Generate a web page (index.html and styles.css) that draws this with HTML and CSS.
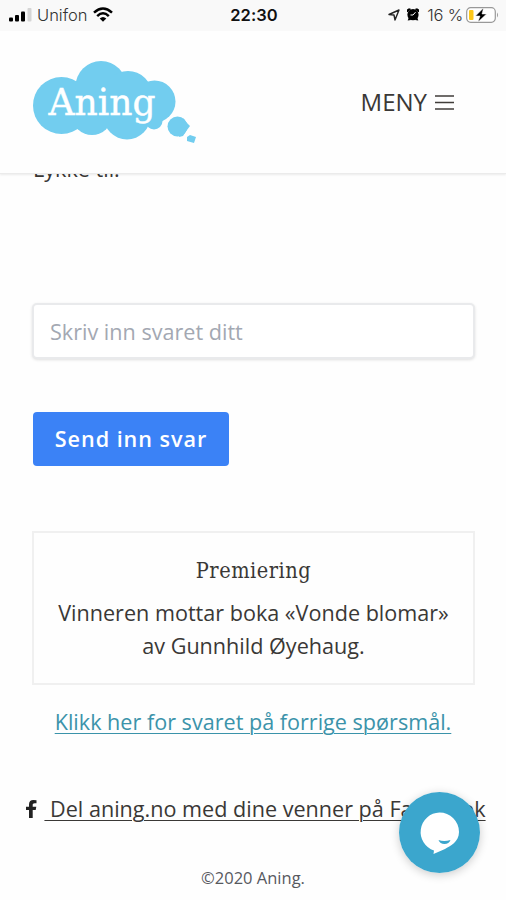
FILE: index.html
```html
<!DOCTYPE html>
<html lang="no">
<head>
<meta charset="utf-8">
<meta name="viewport" content="width=device-width">
<title>Aning</title>
<link rel="stylesheet" href="styles.css">
</head>
<body>
<div class="top">
  <div class="status">
    <div class="status-left">
      <svg class="signal" width="23" height="14" viewBox="0 0 23 14"><rect x="0" y="9.500" width="4" height="4" rx="1"/><rect x="6" y="7" width="4" height="6.500" rx="1"/><rect x="12" y="3.500" width="4" height="10" rx="1"/><rect x="18.500" y="0" width="4" height="13.500" rx="1" fill="#d5d5d5"/></svg>
      <span class="carrier">Unifon</span>
      <svg class="wifi" width="20" height="15" viewBox="0 0 20 15" fill="none" stroke="#000" stroke-width="2.500"><path d="M1 5.600Q10-2.600 19 5.600M4.200 9.100Q10 3.500 15.800 9.100"/><path d="M6.700 11.500Q10 8.500 13.300 11.500L10 14.800Z" fill="#000" stroke="none"/></svg>
    </div>
    <span class="clock">22:30</span>
    <div class="status-right">
      <svg width="12" height="12" viewBox="0 0 12 12" fill="none" stroke="#222" stroke-width="1.400" stroke-linejoin="round"><path d="M1 5.500 11 1 7 11 6 6Z"/></svg>
      <svg class="alarm" width="12" height="13" viewBox="0 0 12 13"><circle cx="6" cy="6.700" r="5.600"/><path d="M0 4V1.500L2 .2 4.200 1 1 4ZM12 4V1.500L10 .2 7.800 1 11 4ZM.7 12.600 2 9 4 12ZM11.300 12.600 10 9 8 12Z"/><path d="M8.500 4.200 6 7H3.500" fill="none" stroke="#fff"/></svg>
      <span class="percent">16 %</span>
      <svg class="battery" width="33" height="16" viewBox="0 0 33 16"><rect x=".7" y=".7" width="28.600" height="14.600" rx="4" fill="#fff" stroke="#999" stroke-width="1.200"/><rect x="3" y="3" width="4.500" height="10" rx="1" fill="#fdc719"/><path d="M31 5.500Q33 8 31 10.500Z" fill="#999"/><path d="M17.500 1 9.500 9H14L12 15 20.500 7H16Z" fill="#000" stroke="#fff" stroke-width=".5"/></svg>
    </div>
  </div>
  <header class="header">
    <svg class="logo" width="165" height="86" viewBox="0 0 165 86">
      <g fill="#72cdef"><circle cx="28.500" cy="44.500" r="28.500"/><circle cx="68" cy="25.500" r="25.500"/><circle cx="95" cy="34" r="24"/><circle cx="121.500" cy="40.500" r="21"/><circle cx="59" cy="54" r="20"/><circle cx="94" cy="55" r="23.500"/><circle cx="121" cy="60" r="8.500"/><rect x="28" y="29" width="100" height="32"/><circle cx="144.500" cy="65.500" r="10"/><path d="m150 57 3 4 4 4-3 4-4 6-4 1ZM154 76l3-2 6 2-2 6-7-2Z"/></g>
      <text class="logo-text" x="15.500" y="54" textLength="107" lengthAdjust="spacingAndGlyphs">Aning</text>
    </svg>
    <div class="menu"><span>MENY</span><svg width="19" height="15" viewBox="0 0 19 15" stroke="#403d3a" stroke-width="1.600"><path d="M0 1h19M0 7.500h19M0 14h19"/></svg></div>
  </header>
</div>
<main>
  <p class="luck">Lykke til!</p>
  <input class="answer" placeholder="Skriv inn svaret ditt" aria-label="Svar">
  <button class="send">Send inn svar</button>
  <section class="prize">
    <h2>Premiering</h2>
    <p>Vinneren mottar boka «Vonde blomar»<br>av Gunnhild Øyehaug.</p>
  </section>
  <a class="previous" href="#">Klikk her for svaret på forrige spørsmål.</a>
</main>
<footer>
  <div class="share"><svg width="11" height="18" viewBox="0 0 11 18"><path d="M3 18V10H0V6.700H3V4.300C3 1.500 4.700 0 7.300 0Q9 0 10.500.3V3.200H8.800C7.200 3.200 6.700 4 6.700 5V6.700H10.300L9.700 10H6.700V18Z" fill="#222"/></svg><a href="#">&nbsp;Del aning.no med dine venner på Facebook</a></div>
  <p class="copy">©2020 Aning.</p>
</footer>
<div class="chat"><svg width="81" height="81" viewBox="0 0 81 81"><circle cx="40.500" cy="40.500" r="40.500" fill="#3ba6cd"/><path d="M40.500 20.500A19.500 19.500 0 0 1 60 40C60 50 51 54 46 57L34.500 62 35 58.500A19.500 19.500 0 0 1 40.500 20.500Z" fill="#fff"/><path d="M39.500 48Q45 50 51.500 48 50 52 45.500 52 41 52 39.500 48Z" fill="#3ba6cd"/></svg></div>
</body>
</html>
```

FILE: styles.css
```css
* { box-sizing: border-box; }
body { margin: 0; width: 506px; height: 900px; overflow: hidden; position: relative; background: #fefefe; color: #3a3836; font: 21.6px/32.4px "Open Sans", "Noto Sans", sans-serif; }
p, h2 { margin: 0; }
.top { position: relative; z-index: 1; height: 174px; background: #fefefe; border-bottom: 1px solid #ebebeb; box-shadow: 0 1px 2px rgba(0,0,0,.08); }
.status { height: 31px; background: #f9f9f9; display: grid; grid-template-columns: 1fr auto 1fr; align-items: center; padding: 0 7px 2px 9px; font: 16.5px/20px Inter, sans-serif; color: #333; }
.status-left, .status-right { display: flex; align-items: center; }
.status-right { justify-content: flex-end; }
.carrier { margin-left: 5px; font-weight: 300; }
.wifi { margin-left: 6px; }
.clock { font-weight: 600; color: #111; letter-spacing: .1px; }
.alarm { margin: 0 8px 0 7px; }
.percent { margin-right: 3px; font-weight: 300; white-space: nowrap; }
.status-right .percent { letter-spacing: -.2px; }
.header { height: 141px; padding: 30px 52px 0 33px; display: flex; justify-content: space-between; align-items: flex-start; }
.logo-text { font: 38px "Roboto Slab", "DejaVu Serif Condensed", "DejaVu Serif", serif; fill: #fff; stroke: #fff; stroke-width: .4px; }
.menu { display: flex; align-items: center; gap: 8px; margin-top: 25px; font-size: 24px; }
main { padding: 0 32px; display: flex; flex-direction: column; align-items: flex-start; }
.luck { margin-top: -21px; padding-left: 1px; }
.answer { width: 443px; height: 56px; margin-top: 118px; padding: 0 16px; border: 2px solid #e9eaec; border-radius: 5px; background: #fff; box-shadow: 0 1px 3px rgba(0,0,0,.12); font: inherit; }
.answer::placeholder { color: #a3a8b2; opacity: 1; }
.send { width: 196px; height: 54px; margin: 53px 0 0 1px; padding: 0; border: 0; border-radius: 4px; background: #3b82f6; color: #fff; font: 600 21.6px/32px "Open Sans", sans-serif; letter-spacing: .95px; }
.prize { width: 443px; height: 154px; margin-top: 65px; padding-top: 22px; border: 2px solid #f0f0f0; text-align: center; white-space: nowrap; }
.prize h2 { font: 21.6px/32px "Roboto Slab", "DejaVu Serif Condensed", "DejaVu Serif", serif; letter-spacing: .5px; margin-bottom: 10px; }
.previous { align-self: center; margin-top: 21px; color: #3b93aa; white-space: nowrap; }
footer { display: flex; flex-direction: column; align-items: center; }
.share { display: flex; align-items: center; gap: 7px; margin-top: 54px; padding-left: 6px; white-space: nowrap; }
.share a { color: inherit; }
a { text-decoration-thickness: 1.300px; text-underline-offset: 3px; }
.copy { margin-top: 37px; font-size: 16.5px; color: #57595e; }
.chat { position: absolute; z-index: 2; left: 399px; top: 792px; width: 81px; height: 81px; border-radius: 50%; box-shadow: 0 2px 10px rgba(0,0,0,.2); }
.chat svg { display: block; }
```
